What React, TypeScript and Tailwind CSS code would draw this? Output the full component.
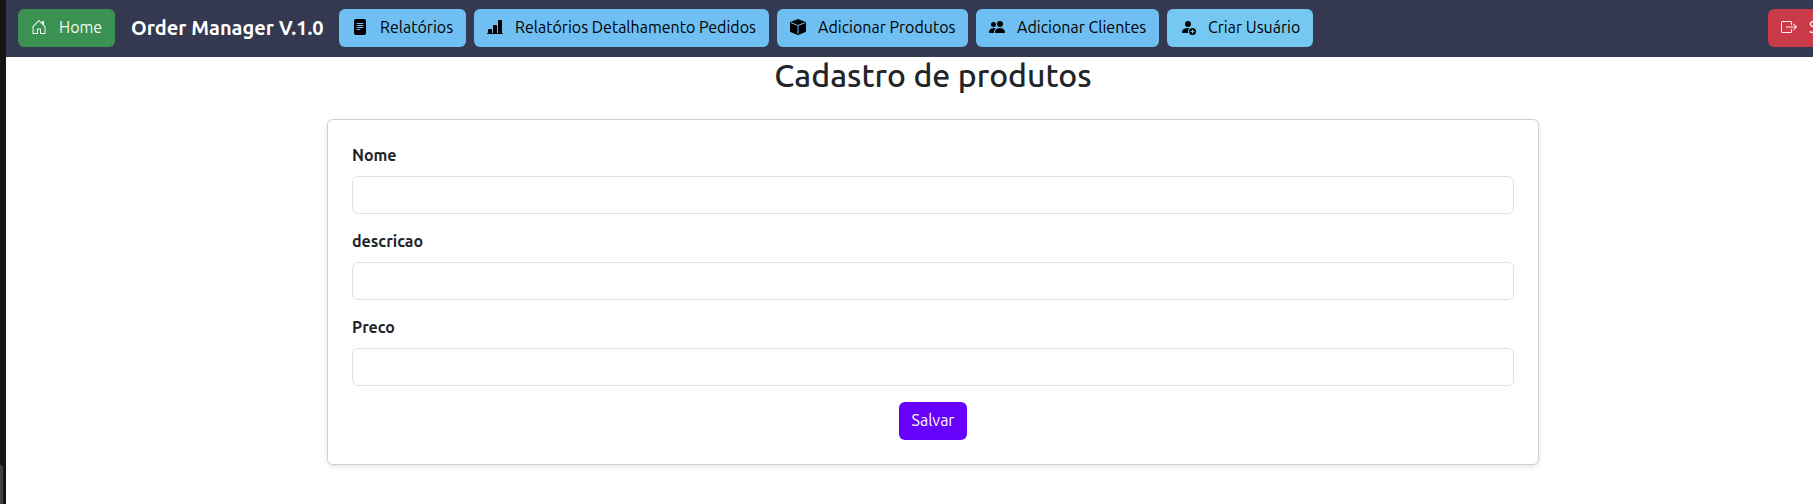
import React from 'react';
import {
  BsBarChartLineFill,
  BsBoxArrowRight,
  BsBoxFill,
  BsFileTextFill,
  BsHouseDoor,
  BsPeopleFill,
  BsPersonFillAdd,
} from 'react-icons/bs';
import type { IconType } from 'react-icons';

type NavButtonProps = { icon: IconType; label: string; look: string };

function NavButton({ icon: Icon, label, look }: NavButtonProps) {
  return (
    <button
      type="button"
      className={`flex h-[38px] shrink-0 items-center gap-3 overflow-hidden rounded-md px-[13px] pb-0.5 text-base leading-6 whitespace-nowrap ${look}`}
    >
      <Icon className="size-4 shrink-0" />
      <span>{label}</span>
    </button>
  );
}

const links: NavButtonProps[] = [
  { icon: BsFileTextFill, label: 'Relatórios', look: 'w-[127px] bg-[#6fbff2] text-black' },
  { icon: BsBarChartLineFill, label: 'Relatórios Detalhamento Pedidos', look: 'w-[295px] bg-[#6fbff2] text-black' },
  { icon: BsBoxFill, label: 'Adicionar Produtos', look: 'w-[191px] bg-[#6fbff2] text-black' },
  { icon: BsPeopleFill, label: 'Adicionar Clientes', look: 'w-[183px] bg-[#6fbff2] text-black' },
  { icon: BsPersonFillAdd, label: 'Criar Usuário', look: 'w-[146px] bg-[#75c8f2] text-black' },
];

function Field({ label }: { label: string }) {
  return (
    <label className="mb-4 block">
      <span className="mb-2.5 block text-base leading-[22px] font-semibold">{label}</span>
      <input type="text" className="block h-[38px] w-full rounded-md border border-[#dee2e6] bg-white px-3" />
    </label>
  );
}

export default function App() {
  return (
    <div className="flex h-[504px] w-full overflow-hidden bg-white font-['Ubuntu','Noto_Sans',sans-serif] text-[#212529]">
      <div className="flex w-1.5 shrink-0 items-end bg-[#161616]">
        <div className="h-[39px] w-[3px] rounded-tr-[3px] bg-[#424242]" />
      </div>
      <div className="w-[1854px] shrink-0">
        <nav className="flex h-[57px] items-center bg-[#343851] px-3 pb-px">
          <NavButton icon={BsHouseDoor} label="Home" look="w-[97px] bg-[#3a9152] text-[#f4faf5]" />
          <span className="mr-4 ml-4 w-[192px] shrink-0 text-xl leading-[30px] font-semibold whitespace-nowrap text-white">
            Order Manager V.1.0
          </span>
          <div className="flex gap-2">
            {links.map((link) => (
              <NavButton key={link.label} {...link} />
            ))}
          </div>
          <div className="ml-auto">
            <NavButton icon={BsBoxArrowRight} label="Sair" look="w-[80px] bg-[#c93a4a] text-[#fdf2f4]" />
          </div>
        </nav>
        <main>
          <h2 className="mb-[26px] text-center text-[32px] leading-9 font-medium">Cadastro de produtos</h2>
          <form className="mx-auto h-[346px] w-[1212px] rounded-md border border-[#cfd0d1] bg-white p-6 shadow-[0_2px_4px_rgba(0,0,0,0.1)]">
            <Field label="Nome" />
            <Field label="descricao" />
            <Field label="Preco" />
            <div className="flex justify-center">
              <button
                type="button"
                className="h-[38px] w-[68px] rounded-md bg-[#6602fc] pb-0.5 text-base leading-6 text-white"
              >
                Salvar
              </button>
            </div>
          </form>
        </main>
      </div>
    </div>
  );
}
